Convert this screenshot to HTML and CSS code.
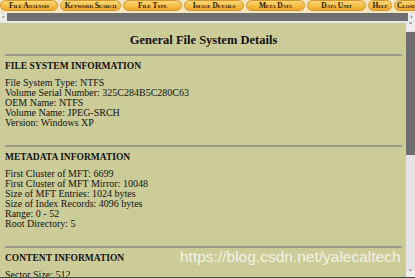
FILE: index.html
```html
<!DOCTYPE html>
<html lang="en">
<head>
    <meta charset="UTF-8">
    <title>General File System Details</title>
    <link rel="stylesheet" href="styles.css">
</head>
<body>
    <nav class="tabs">
        <span class="tab t1">File Analysis</span>
        <span class="tab t2">Keyword Search</span>
        <span class="tab t3">File Type</span>
        <span class="tab t4">Image Details</span>
        <span class="tab t5">Meta Data</span>
        <span class="tab t6">Data Unit</span>
        <span class="tab t7">Help</span>
        <span class="tab t8">Close</span>
    </nav>
    <div class="hscroll">
        <span class="sbtn">&#8249;</span>
        <span class="htrack"></span>
        <span class="sbtn">&#8250;</span>
    </div>
    <div class="frame">
        <div class="content">
            <h2 class="title">General File System Details</h2>

            <div class="section">
                <h3>FILE SYSTEM INFORMATION</h3>
                <div class="lines">
                    File System Type: NTFS<br>
                    Volume Serial Number: 325C284B5C280C63<br>
                    OEM Name: NTFS<br>
                    Volume Name: JPEG-SRCH<br>
                    Version: Windows XP
                </div>
            </div>

            <div class="section">
                <h3>METADATA INFORMATION</h3>
                <div class="lines">
                    First Cluster of MFT: 6699<br>
                    First Cluster of MFT Mirror: 10048<br>
                    Size of MFT Entries: 1024 bytes<br>
                    Size of Index Records: 4096 bytes<br>
                    Range: 0 - 52<br>
                    Root Directory: 5
                </div>
            </div>

            <div class="section">
                <h3>CONTENT INFORMATION</h3>
                <div class="lines">
                    Sector Size: 512
                </div>
            </div>

            <div class="watermark">https://blog.csdn.net/yalecaltech</div>
        </div>
        <div class="vscroll">
            <span class="vbtn">&#710;</span>
            <span class="vthumb"></span>
            <span class="vtrack"></span>
            <span class="vbtn">&#711;</span>
        </div>
    </div>
</body>
</html>
```

FILE: styles.css
```css
body {
    margin: 0;
    padding: 0;
    width: 415px;
    height: 278px;
    overflow: hidden;
    background-color: #f4ead0;
    font-family: "Liberation Serif", serif;
}

/* top navigation tabs */
.tabs {
    display: flex;
    height: 13px;
    background-color: #f3e6c0;
    overflow: hidden;
    white-space: nowrap;
}

.tab {
    flex: none;
    box-sizing: border-box;
    height: 11px;
    margin-right: 2px;
    border: 1px solid #d8962a;
    border-radius: 6px;
    background: linear-gradient(#fcd97a, #f6bd45 55%, #eda52c);
    color: #2b1a02;
    font-size: 7.5px;
    font-weight: bold;
    font-variant: small-caps;
    letter-spacing: -0.1px;
    line-height: 10px;
    text-align: center;
    overflow: hidden;
}

.t1 { width: 58px; }
.t2 { width: 61px; }
.t3 { width: 59px; }
.t4 { width: 60px; }
.t5 { width: 59px; }
.t6 { width: 59px; }
.t7 { width: 24px; }
.t8 { width: 28px; margin-right: 0; text-align: left; padding-left: 2px; }

/* horizontal scrollbar */
.hscroll {
    display: flex;
    height: 8px;
    border-bottom: 2px solid #e6e6e6;
}

.sbtn {
    width: 7px;
    background-color: #ececec;
    color: #333;
    font-family: "DejaVu Sans", sans-serif;
    font-size: 7px;
    line-height: 8px;
    text-align: center;
}

.htrack {
    flex: 1;
    background-color: #6f6f6f;
}

/* main frame */
.frame {
    display: flex;
    height: 254px;
    border-bottom: 1px solid #3c4a48;
}

.content {
    position: relative;
    flex: 1;
    overflow: hidden;
    background-color: #cccc99;
    padding: 0 4px 0 5px;
    color: #111;
}

.title {
    margin: 0;
    padding-top: 9px;
    height: 16px;
    margin-bottom: 6px;
    font-size: 12.5px;
    line-height: 16px;
    text-align: center;
}

.section {
    border-top: 2px solid #9c9c8c;
    padding-top: 4px;
    margin-bottom: 17px;
}

.section h3 {
    margin: 0 0 6px 0;
    font-size: 9.5px;
    line-height: 12px;
}

.lines {
    font-size: 10px;
    line-height: 10px;
}

.watermark {
    position: absolute;
    left: 180px;
    top: 224px;
    color: rgba(255, 255, 255, 0.78);
    font-family: "Liberation Sans", sans-serif;
    font-size: 15.5px;
    line-height: 20px;
    white-space: nowrap;
}

/* vertical scrollbar */
.vscroll {
    display: flex;
    flex-direction: column;
    width: 9px;
    background-color: #e4e4e4;
}

.vbtn {
    height: 7px;
    background-color: #eeeeee;
    color: #333;
    font-family: "DejaVu Sans", sans-serif;
    font-size: 8px;
    line-height: 10px;
    text-align: center;
}

.vthumb {
    height: 123px;
    margin-top: 2px;
    background-color: #6f6f6f;
}

.vtrack {
    flex: 1;
}
```
